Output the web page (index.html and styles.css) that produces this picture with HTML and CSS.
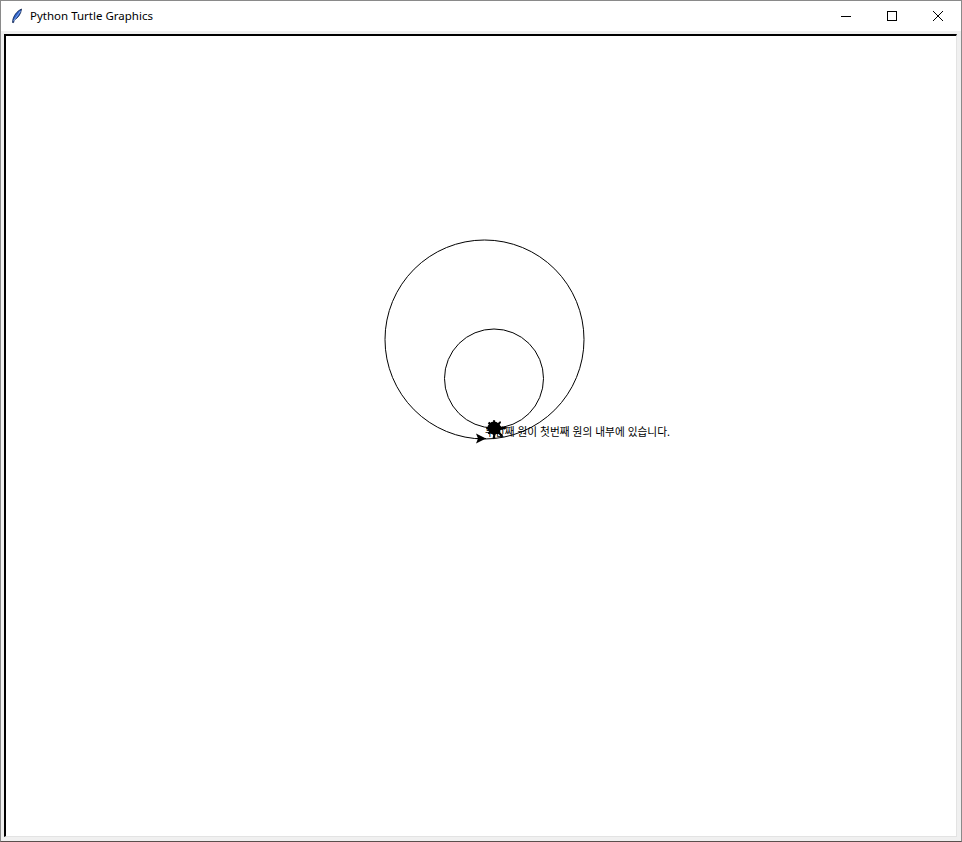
FILE: index.html
```html
<!DOCTYPE html>
<html lang="ko">
<head>
<meta charset="utf-8">
<title>Python Turtle Graphics</title>
<link rel="stylesheet" href="styles.css">
</head>
<body>
<div class="window">
  <div class="titlebar">
    <svg class="app-icon" width="16" height="16" viewBox="0 0 16 16">
      <path d="M12.5 1 C9 2.5 5.5 6 4 11 L3.5 14.5 L4.6 14.6 L5.2 12 C9 10 12 6 12.5 1 Z" fill="#2e62c9" stroke="#0b1f4a" stroke-width="0.8"/>
      <path d="M11.5 3 L4.5 13" stroke="#9fc2ff" stroke-width="0.7" fill="none"/>
    </svg>
    <span class="title">Python Turtle Graphics</span>
    <div class="controls">
      <div class="ctl">
        <svg width="12" height="12" viewBox="0 0 12 12"><path d="M1 6.5 H11" stroke="#000" stroke-width="1"/></svg>
      </div>
      <div class="ctl">
        <svg width="12" height="12" viewBox="0 0 12 12"><rect x="1.5" y="1.5" width="9" height="9" fill="none" stroke="#000" stroke-width="1"/></svg>
      </div>
      <div class="ctl">
        <svg width="12" height="12" viewBox="0 0 12 12"><path d="M1 1 L11 11 M11 1 L1 11" stroke="#000" stroke-width="1"/></svg>
      </div>
    </div>
  </div>
  <div class="client">
    <div class="canvas">
      <svg class="drawing" width="950" height="800" viewBox="6 36 950 800">
        <circle cx="484.5" cy="339.5" r="99.5" fill="none" stroke="#000" stroke-width="1"/>
        <circle cx="494" cy="378.5" r="49.5" fill="none" stroke="#000" stroke-width="1"/>
        <line x1="476" y1="438.5" x2="486" y2="438.5" stroke="#000"/>
        <text x="485" y="436" class="msg" textLength="185" lengthAdjust="spacingAndGlyphs">두번째 원이 첫번째 원의 내부에 있습니다.</text>
        <g transform="translate(494 428) rotate(-90) scale(0.78)">
          <polygon fill="#000" points="0,16 -2,14 -1,10 -4,7 -7,9 -9,8 -6,5 -7,1 -5,-3 -8,-6 -6,-8 -4,-5 0,-7 4,-5 6,-8 8,-6 5,-3 7,1 6,5 9,8 7,9 4,7 1,10 2,14"/>
        </g>
        <g transform="translate(494 428) rotate(-45) scale(0.78)">
          <polygon fill="#000" points="0,16 -2,14 -1,10 -4,7 -7,9 -9,8 -6,5 -7,1 -5,-3 -8,-6 -6,-8 -4,-5 0,-7 4,-5 6,-8 8,-6 5,-3 7,1 6,5 9,8 7,9 4,7 1,10 2,14"/>
        </g>
        <g transform="translate(494 428) rotate(0) scale(0.7)">
          <polygon fill="#000" points="0,16 -2,14 -1,10 -4,7 -7,9 -9,8 -6,5 -7,1 -5,-3 -8,-6 -6,-8 -4,-5 0,-7 4,-5 6,-8 8,-6 5,-3 7,1 6,5 9,8 7,9 4,7 1,10 2,14"/>
        </g>
        <circle cx="494" cy="428" r="6.5" fill="#000"/>
        <polygon fill="#000" points="486,438.5 476,433.5 478,438.5 476,443.5"/>
      </svg>
    </div>
  </div>
</div>
</body>
</html>
```

FILE: styles.css
```css
html, body {
  margin: 0;
  padding: 0;
  background: #3b3433;
}
.window {
  width: 962px;
  height: 842px;
  box-sizing: border-box;
  border: 1px solid #8a8a8a;
  border-bottom-color: #5a4f4d;
  background: #f0f0f0;
  display: flex;
  flex-direction: column;
}
.titlebar {
  height: 30px;
  background: #ffffff;
  display: flex;
  align-items: center;
  font-family: "Noto Sans", "Open Sans", sans-serif;
  font-size: 11.5px;
  color: #000;
}
.app-icon {
  margin-left: 8px;
  margin-right: 5px;
  flex: none;
}
.title {
  flex: 1;
  line-height: 30px;
}
.controls {
  display: flex;
  height: 30px;
}
.ctl {
  width: 46px;
  height: 30px;
  display: flex;
  align-items: center;
  justify-content: center;
}
.client {
  flex: 1;
  padding: 3px 4px 4px 3px;
  display: flex;
}
.canvas {
  flex: 1;
  box-sizing: border-box;
  border-top: 2px solid #000;
  border-left: 2px solid #000;
  border-right: 1px solid #e3e3e3;
  border-bottom: 1px solid #e3e3e3;
  background: #ffffff;
  overflow: hidden;
}
.drawing {
  display: block;
}
.msg {
  font-family: "Noto Sans CJK KR", "Noto Sans", sans-serif;
  font-size: 11px;
  fill: #000;
}
```
